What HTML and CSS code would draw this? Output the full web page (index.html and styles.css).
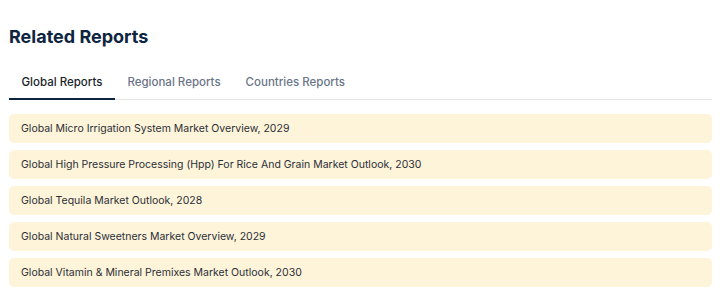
FILE: index.html
```html
<!DOCTYPE html>
<html lang="en">
<head>
    <meta charset="UTF-8">
    <meta name="viewport" content="width=device-width, initial-scale=1.0">
    <title>Related Reports</title>
    <link rel="stylesheet" href="styles.css">
</head>
<body>

    <!-- Title -->
    <h2 class="title">Related Reports</h2>

    <!-- Tabs -->
    <div class="tabs">
        <button class="tab active">Global Reports</button>
        <button class="tab">Regional Reports</button>
        <button class="tab">Countries Reports</button>
    </div>

    <!-- Report List -->
    <div class="report-list">
        <a class="report-item" href="#">Global Micro Irrigation System Market Overview, 2029</a>
        <a class="report-item" href="#">Global High Pressure Processing (Hpp) For Rice And Grain Market Outlook, 2030</a>
        <a class="report-item" href="#">Global Tequila Market Outlook, 2028</a>
        <a class="report-item" href="#">Global Natural Sweetners Market Overview, 2029</a>
        <a class="report-item" href="#">Global Vitamin &amp; Mineral Premixes Market Outlook, 2030</a>
    </div>

</body>
</html>
```

FILE: styles.css
```css
body {
    font-family: Inter, "Noto Sans", sans-serif;
    margin: 0;
    padding: 26px 11px 0 9px;
    background: #fff;
}
.title {
    margin: 0;
    font-size: 18px;
    font-weight: 700;
    color: #0d2540;
    line-height: 22px;
}
.tabs {
    display: flex;
    margin-top: 21px;
    border-bottom: 1px solid #e5e7eb;
}
.tab {
    background: none;
    border: none;
    border-bottom: 2px solid transparent;
    margin-bottom: -1px;
    padding: 6px 12.5px 9px 12.5px;
    font-family: inherit;
    font-size: 11.5px;
    font-weight: 500;
    color: #6b7588;
    cursor: pointer;
}
.tab.active {
    color: #1a1f2b;
    border-bottom-color: #0d2540;
}
.report-list {
    display: flex;
    flex-direction: column;
    gap: 7px;
    margin-top: 14px;
}
.report-item {
    display: block;
    background-color: #fef4d9;
    border-radius: 5px;
    height: 29px;
    line-height: 29px;
    padding: 0 12px;
    font-size: 10.5px;
    color: #2a2f38;
    text-decoration: none;
}
```
